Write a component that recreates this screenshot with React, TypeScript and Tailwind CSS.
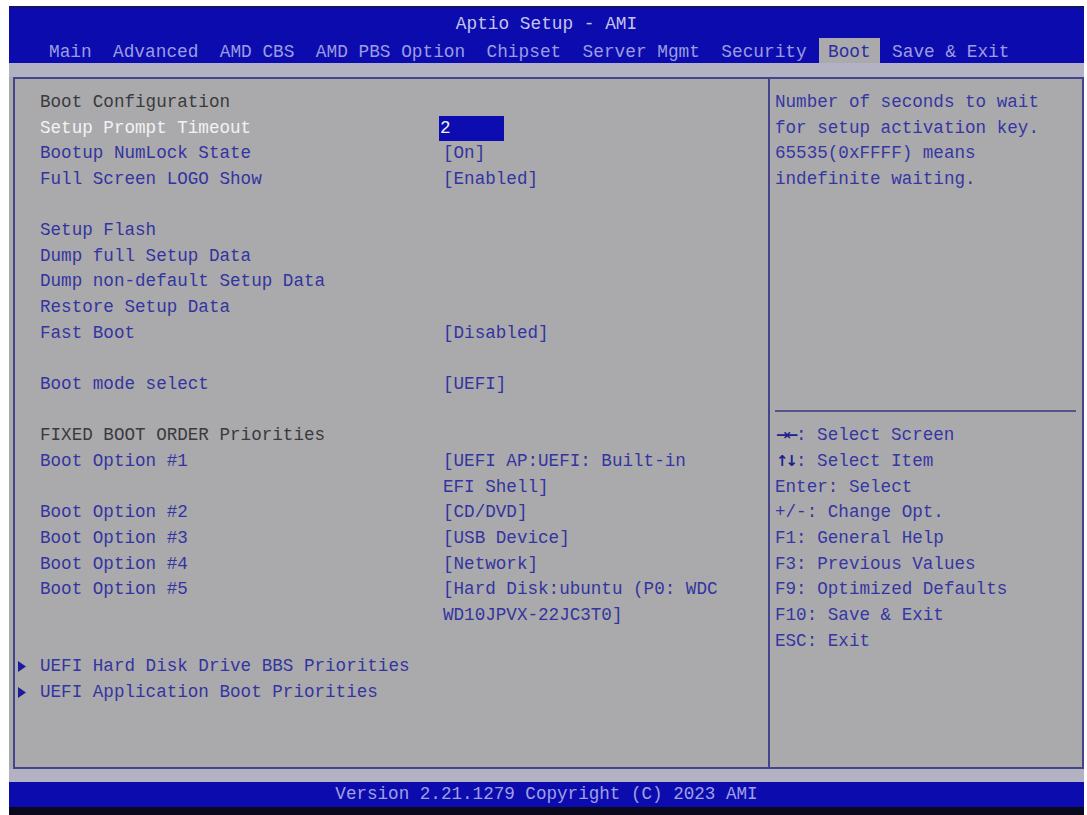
import React from 'react';

type Row = {
  label?: string;
  value?: string;
  kind?: 'head' | 'item' | 'sel' | 'sub' | 'blank';
};

const TABS = ['Main', 'Advanced', 'AMD CBS', 'AMD PBS Option', 'Chipset', 'Server Mgmt', 'Security', 'Boot', 'Save & Exit'];

const ROWS: Row[] = [
  { label: 'Boot Configuration', kind: 'head' },
  { label: 'Setup Prompt Timeout', value: '2', kind: 'sel' },
  { label: 'Bootup NumLock State', value: '[On]' },
  { label: 'Full Screen LOGO Show', value: '[Enabled]' },
  { kind: 'blank' },
  { label: 'Setup Flash' },
  { label: 'Dump full Setup Data' },
  { label: 'Dump non-default Setup Data' },
  { label: 'Restore Setup Data' },
  { label: 'Fast Boot', value: '[Disabled]' },
  { kind: 'blank' },
  { label: 'Boot mode select', value: '[UEFI]' },
  { kind: 'blank' },
  { label: 'FIXED BOOT ORDER Priorities', kind: 'head' },
  { label: 'Boot Option #1', value: '[UEFI AP:UEFI: Built-in' },
  { value: 'EFI Shell]' },
  { label: 'Boot Option #2', value: '[CD/DVD]' },
  { label: 'Boot Option #3', value: '[USB Device]' },
  { label: 'Boot Option #4', value: '[Network]' },
  { label: 'Boot Option #5', value: '[Hard Disk:ubuntu (P0: WDC' },
  { value: 'WD10JPVX-22JC3T0]' },
  { kind: 'blank' },
  { label: 'UEFI Hard Disk Drive BBS Priorities', kind: 'sub' },
  { label: 'UEFI Application Boot Priorities', kind: 'sub' },
];

const HELP = ['Number of seconds to wait', 'for setup activation key.', '65535(0xFFFF) means', 'indefinite waiting.'];

const KEYS: [string, string][] = [
  ['\u2192\u2190', ': Select Screen'],
  ['\u2191\u2193', ': Select Item'],
  ['', 'Enter: Select'],
  ['', '+/-: Change Opt.'],
  ['', 'F1: General Help'],
  ['', 'F3: Previous Values'],
  ['', 'F9: Optimized Defaults'],
  ['', 'F10: Save & Exit'],
  ['', 'ESC: Exit'],
];

const SetupRow: React.FC<{ row: Row }> = ({ row }) => {
  if (row.kind === 'blank') return <div className="h-[25.65px]" />;

  if (row.kind === 'sub') {
    return (
      <div className="h-[25.65px] flex items-center -ml-[22px] text-[#3434a0]">
        <span className="w-[22px] flex items-center">
          <svg width="8" height="11" viewBox="0 0 8 11">
            <polygon points="0,0 8,5.5 0,11" fill="#1c1c9a" />
          </svg>
        </span>
        <span>{row.label}</span>
      </div>
    );
  }

  const labelColor =
    row.kind === 'head' ? 'text-[#3a3a3e]' : row.kind === 'sel' ? 'text-[#f2f2f6]' : 'text-[#3434a0]';

  return (
    <div className="h-[25.65px] flex">
      <span className={`w-[400px] shrink-0 ${labelColor}`}>{row.label ?? ''}</span>
      {row.value &&
        (row.kind === 'sel' ? (
          <span className="w-[65px] -ml-[1px] pl-[1px] bg-[#0c0cb0] text-[#f2f2f6]">{row.value}</span>
        ) : (
          <span className="pl-[3px] text-[#3434a0]">{row.value}</span>
        ))}
    </div>
  );
};

export default function App() {
  return (
    <div
      className="w-[1087px] h-[815px] bg-white pl-[9px] pt-[6px] pr-[3px] flex flex-col overflow-hidden"
      style={{ fontFamily: '"Liberation Mono", "DejaVu Sans Mono", monospace' }}
    >
      <div className="flex-1 flex flex-col bg-[#aaaaad] text-[17.6px] leading-[25.65px]">
        {/* Header */}
        <div className="h-[57px] bg-[#0c0cae] border-t-2 border-[#141466] flex flex-col">
          <div className="h-[30px] pt-[4px] text-center text-[17.8px] leading-[25px] text-[#c4c4ec]">
            Aptio Setup - AMI
          </div>
          <div className="h-[25px] flex items-stretch pl-[40px] text-[17.8px] leading-[25px] text-[#9c9ce2] whitespace-pre">
            {TABS.map((tab, i) => (
              <React.Fragment key={tab}>
                {i > 0 && <span>{'  '}</span>}
                {tab === 'Boot' ? (
                  <span className="bg-[#aaaaad] text-[#2c2ca4] px-[9px] -mx-[9px] pt-[2px]">{tab}</span>
                ) : (
                  <span className="pt-[2px]">{tab}</span>
                )}
              </React.Fragment>
            ))}
          </div>
        </div>

        <div className="h-[14px] bg-[#b2b2c2]" />

        {/* Main box */}
        <div className="h-[692px] ml-[4px] border-2 border-[#44448c] flex">
          <div className="w-[755px] shrink-0 border-r-2 border-[#44448c] pt-[11px] pl-[25px] flex flex-col">
            {ROWS.map((row, i) => (
              <SetupRow key={i} row={row} />
            ))}
          </div>

          <div className="flex-1 pt-[11px] flex flex-col">
            <div className="h-[307.8px] pl-[5px] text-[#3636a2]">
              {HELP.map(line => (
                <div key={line} className="h-[25.65px] whitespace-pre">{line}</div>
              ))}
            </div>
            <div className="h-[25.65px] flex items-center pl-[5px] pr-[6px]">
              <div className="w-full h-[2px] bg-[#54548a]" />
            </div>
            <div className="pl-[5px] text-[#3636a2]">
              {KEYS.map(([arrows, text]) => (
                <div key={text} className="h-[25.65px] flex whitespace-pre">
                  {arrows && (
                    <span
                      className="w-[21px] flex items-center justify-center font-bold text-[15px] tracking-[-3px] text-[#20208e]"
                      style={{ fontFamily: '"DejaVu Sans", sans-serif' }}
                    >
                      {arrows}
                    </span>
                  )}
                  <span>{text}</span>
                </div>
              ))}
            </div>
          </div>
        </div>

        <div className="h-[13px] bg-[#b2b2c2]" />

        {/* Footer */}
        <div className="h-[25px] bg-[#0c0cae] text-center text-[17.6px] leading-[25px] text-[#a0a0e4]">
          Version 2.21.1279 Copyright (C) 2023 AMI
        </div>
        <div className="h-[8px] bg-[#0a0a1c]" />
      </div>
    </div>
  );
}
